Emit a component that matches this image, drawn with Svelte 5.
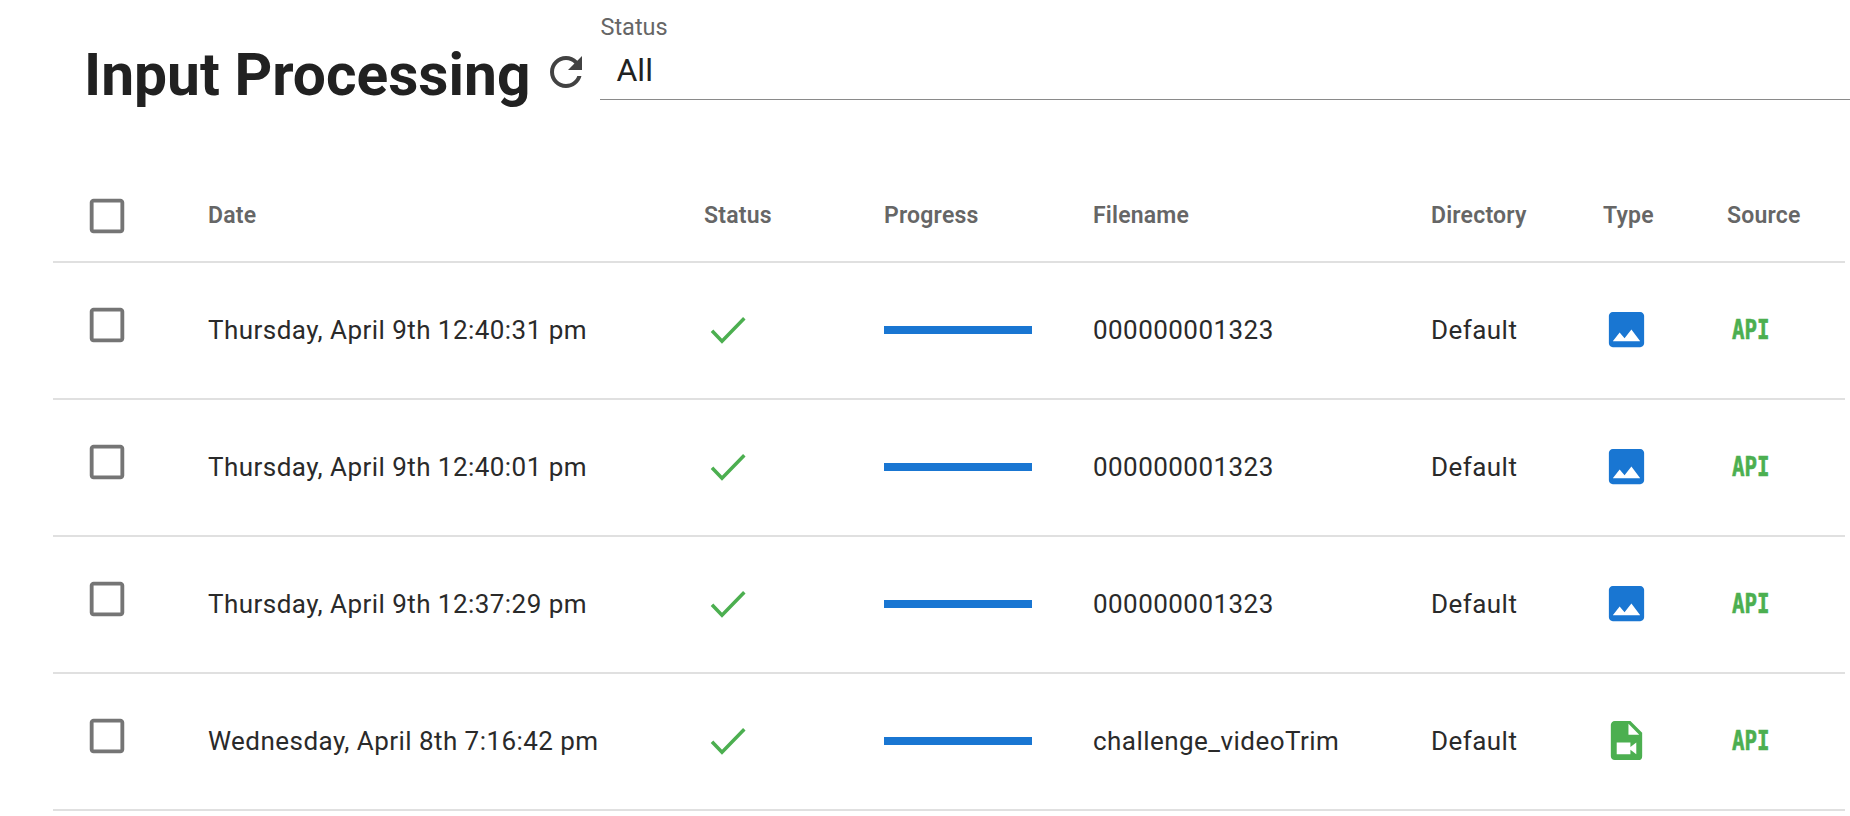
<script lang="ts">
  const rows = [
    { date: 'Thursday, April 9th 12:40:31 pm', filename: '000000001323', kind: 'image' },
    { date: 'Thursday, April 9th 12:40:01 pm', filename: '000000001323', kind: 'image' },
    { date: 'Thursday, April 9th 12:37:29 pm', filename: '000000001323', kind: 'image' },
    { date: 'Wednesday, April 8th 7:16:42 pm', filename: 'challenge_videoTrim', kind: 'video' }
  ];

  const boxPath = 'M19 5v14H5V5h14m0-2H5c-1.1 0-2 .9-2 2v14c0 1.1.9 2 2 2h14c1.1 0 2-.9 2-2V5c0-1.1-.9-2-2-2z';
</script>

<div class="page">
  <header class="top">
    <h1>Input Processing</h1>
    <button class="refresh" aria-label="Refresh">
      <svg viewBox="0 0 24 24"><path d="M17.65 6.35C16.2 4.9 14.21 4 12 4c-4.42 0-7.99 3.58-7.99 8s3.57 8 7.99 8c3.73 0 6.84-2.55 7.73-6h-2.08c-.82 2.33-3.04 4-5.65 4-3.31 0-6-2.69-6-6s2.69-6 6-6c1.66 0 3.14.69 4.22 1.78L13 11h7V4l-2.35 2.35z" /></svg>
    </button>
    <div class="select">
      <span class="select-label">Status</span>
      <span class="select-value">All</span>
    </div>
  </header>

  <table>
    <colgroup>
      <col style="width:155px" />
      <col style="width:496px" />
      <col style="width:180px" />
      <col style="width:209px" />
      <col style="width:338px" />
      <col style="width:172px" />
      <col style="width:124px" />
      <col />
    </colgroup>
    <thead>
      <tr>
        <th><svg class="check head" viewBox="0 0 24 24"><path d={boxPath} /></svg></th>
        <th>Date</th>
        <th>Status</th>
        <th>Progress</th>
        <th>Filename</th>
        <th>Directory</th>
        <th>Type</th>
        <th>Source</th>
      </tr>
    </thead>
    <tbody>
      {#each rows as row}
        <tr>
          <td><svg class="check raised" viewBox="0 0 24 24"><path d={boxPath} /></svg></td>
          <td>{row.date}</td>
          <td>
            <svg class="done" viewBox="0 0 40 30"><path d="M4 15.7 L14 26.3 L36.300 3.300" /></svg>
          </td>
          <td><div class="bar"></div></td>
          <td>{row.filename}</td>
          <td>Default</td>
          <td class="type">
            {#if row.kind === 'image'}
              <svg class="icon blue" viewBox="0 0 24 24"><path d="M21 19V5c0-1.1-.9-2-2-2H5c-1.1 0-2 .9-2 2v14c0 1.100.9 2 2 2h14c1.100 0 2-.9 2-2zM8.500 13.500l2.500 3.010L14.500 12l4.500 6H5l3.500-4.500z" /></svg>
            {:else}
              <svg class="icon green" viewBox="0 0 24 24"><path d="M13,9H18.500L13,3.500V9M6,2H14L20,8V20A2,2 0 0,1 18,22H6C4.890,22 4,21.100 4,20V4C4,2.890 4.890,2 6,2M17,19V13L14,15.260V13H7V19H14V16.740L17,19Z" /></svg>
            {/if}
          </td>
          <td><span class="api">API</span></td>
        </tr>
      {/each}
    </tbody>
  </table>
</div>

<style>
  :global(body) {
    margin: 0;
    background: #fff;
    overflow: hidden;
  }

  .page {
    font-family: Roboto, "Liberation Sans", sans-serif;
    color: #212121;
    padding-left: 53px;
    padding-right: 5px;
  }

  .top {
    display: flex;
    align-items: flex-start;
    height: 168px;
    margin-right: -5px;
  }

  h1 {
    margin: 42px 0 0 31px;
    font-size: 58.7px;
    line-height: 66px;
    font-weight: 700;
    white-space: nowrap;
  }

  .refresh {
    width: 48px;
    height: 48px;
    margin: 48px 0 0 12px;
    padding: 0;
    border: 0;
    background: none;
  }

  .refresh svg {
    display: block;
    width: 48px;
    height: 48px;
    fill: #424242;
  }

  .select {
    flex: 1;
    display: flex;
    flex-direction: column;
    margin: 13px 0 0 10px;
    height: 86px;
    border-bottom: 1px solid #8a8a8a;
  }

  .select-label {
    font-size: 23.5px;
    line-height: 28px;
    color: #666;
  }

  .select-value {
    font-size: 32px;
    line-height: 40px;
    margin-top: 9px;
    padding-left: 16px;
    color: #212121;
  }

  table {
    width: 1792px;
    table-layout: fixed;
    border-collapse: collapse;
  }

  th {
    height: 91px;
    padding: 2px 0 0;
    text-align: left;
    font-size: 23px;
    font-weight: 600;
    letter-spacing: 0.2px;
    color: #666;
    border-bottom: 2px solid #e0e0e0;
  }

  td {
    height: 133px;
    padding: 0 0 2px;
    font-size: 26px;
    letter-spacing: 0.45px;
    color: #2a2a2a;
    border-bottom: 2px solid #e0e0e0;
    white-space: nowrap;
  }

  .check {
    display: block;
    width: 46px;
    height: 46px;
    margin-left: 31px;
    fill: #757575;
  }

  .head {
    margin-top: 0;
  }

  .raised {
    margin-top: -9px;
  }

  .done {
    display: block;
    width: 40px;
    height: 30px;
    fill: none;
    stroke: #4caf50;
    stroke-width: 3.500px;
    margin-left: 4px;
  }

  .bar {
    width: 148px;
    height: 8px;
    background: #1976d2;
  }

  .icon {
    display: block;
    width: 47px;
    height: 47px;
  }

  .blue {
    fill: #1976d2;
  }

  .green {
    fill: #4caf50;
  }

  .api {
    display: inline-block;
    font-family: "DejaVu Sans Mono", monospace;
    font-size: 27px;
    font-weight: 700;
    letter-spacing: 0;
    line-height: 32px;
    color: #4caf50;
    -webkit-text-stroke: 0.6px #4caf50;
    margin: 1px 0 0 5px;
    transform: scaleX(0.77);
    transform-origin: left center;
  }
</style>
